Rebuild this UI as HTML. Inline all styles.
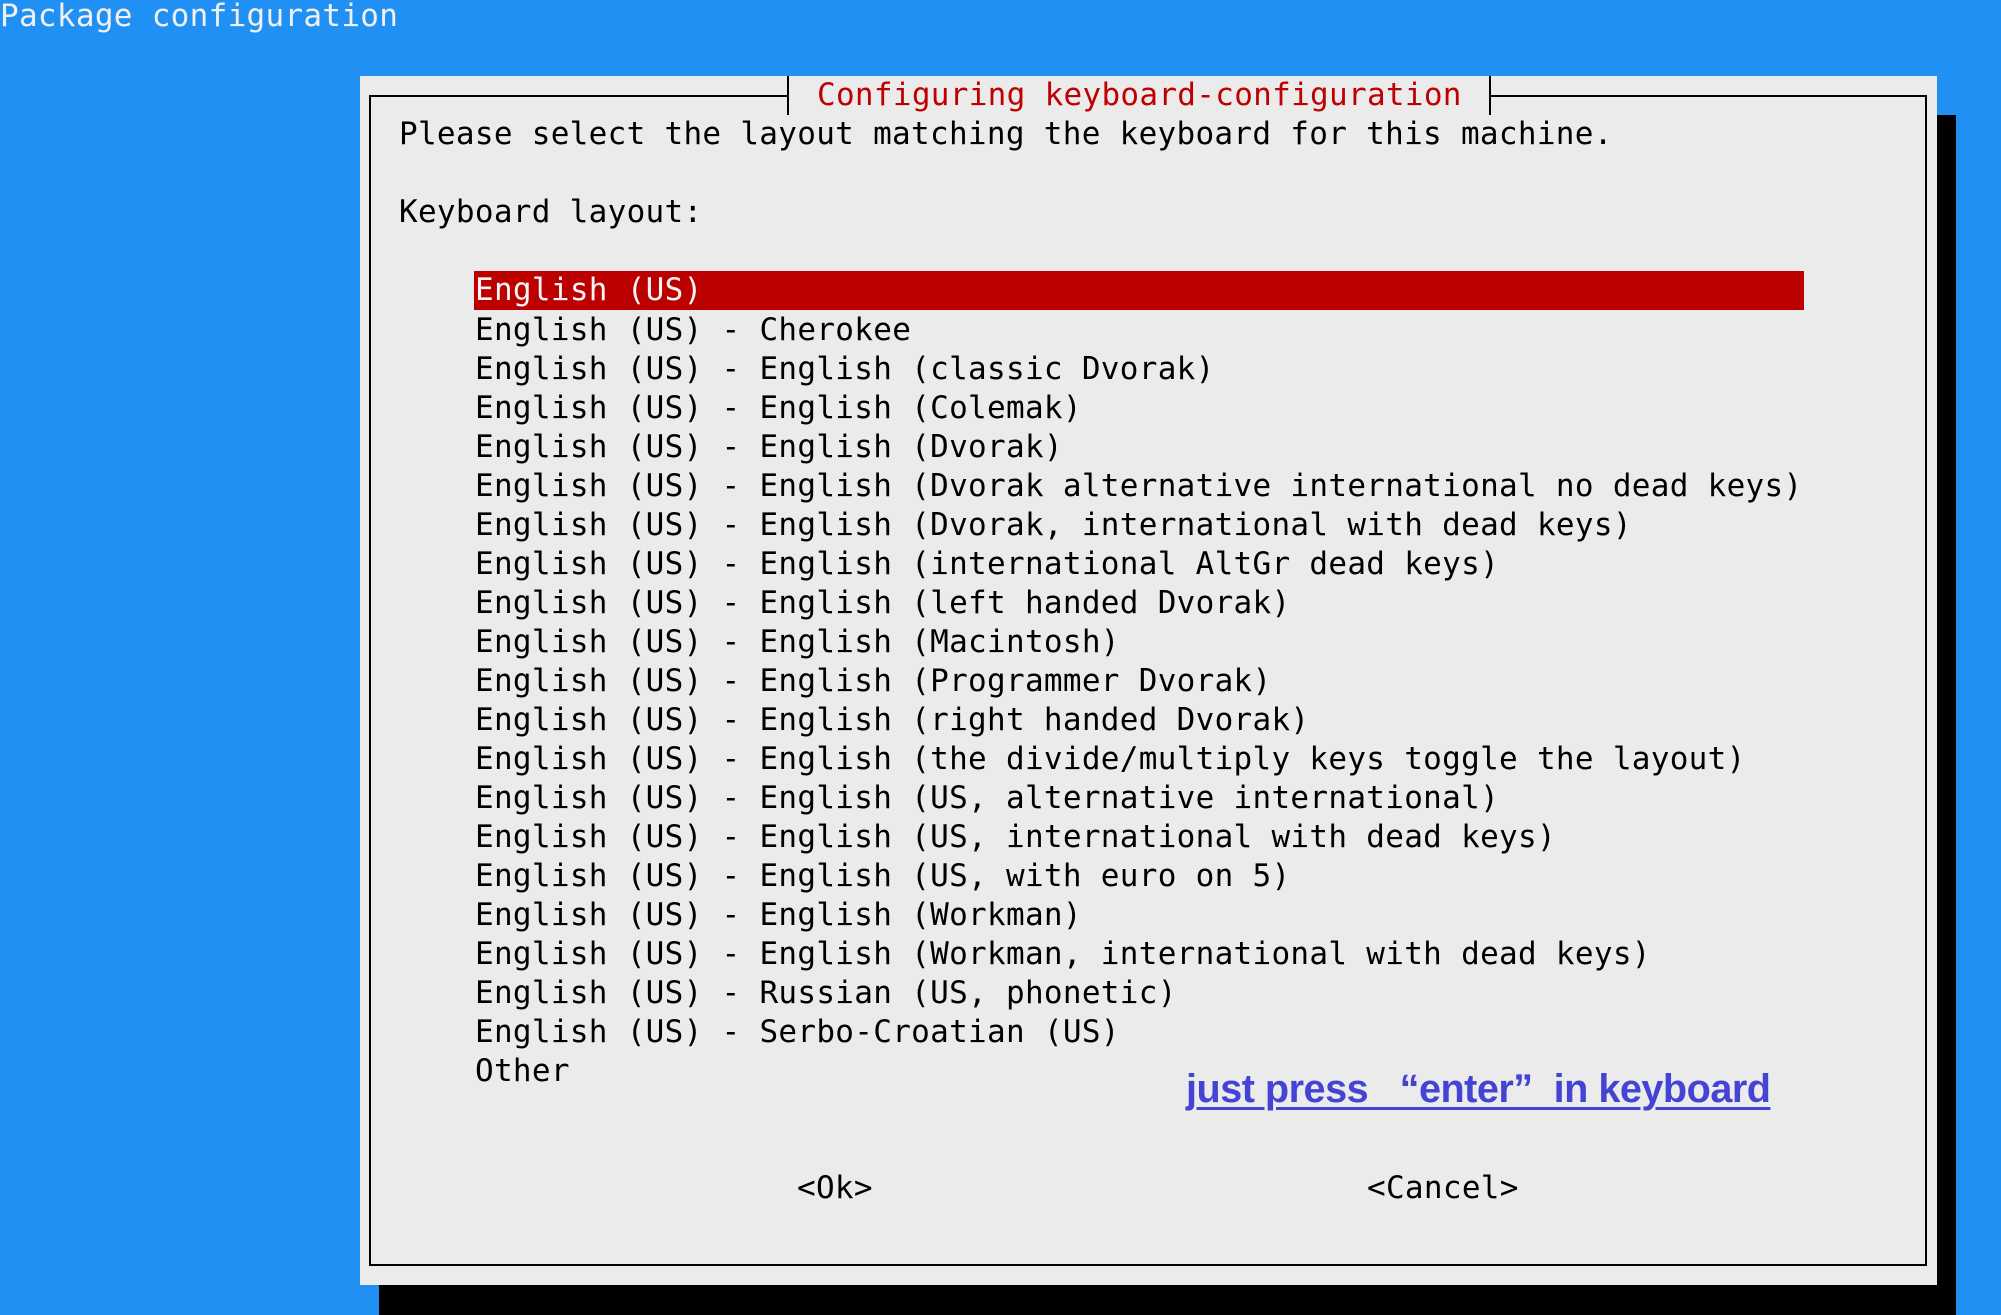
<!DOCTYPE html>
<html><head><meta charset="utf-8"><style>
html,body{margin:0;padding:0}
body{width:2001px;height:1300px;background:#2190f4;position:relative;overflow:hidden;font-family:"DejaVu Sans Mono","Liberation Mono",monospace;font-size:31px;}
.t{position:absolute;white-space:pre;line-height:39px;height:39px;color:#000;letter-spacing:0.3px}
#shadow{position:absolute;left:379px;top:115px;width:1577px;height:1200px;background:#000}
#panel{position:absolute;left:360px;top:76px;width:1577px;height:1209px;background:#ebebeb}
#inner{position:absolute;left:369px;top:95px;width:1558px;height:1171px;border:2px solid #000;box-sizing:border-box}
#gap{position:absolute;left:789px;top:90px;width:700px;height:12px;background:#ebebeb}
.tick{position:absolute;top:76px;width:2px;height:39px;background:#000}
#hl{position:absolute;left:474px;top:271px;width:1330px;height:39px;background:#bc0000}
#link{position:absolute;left:1186px;top:1067px;font-family:"Liberation Sans","DejaVu Sans",sans-serif;font-weight:bold;font-size:40px;color:#4444d4;text-decoration:underline;text-decoration-thickness:3px;text-underline-offset:5px;white-space:pre;letter-spacing:-0.5px;transform:scaleX(0.99);transform-origin:left}
</style></head><body>
<div class="t" style="left:0;top:-3px;color:#f0f0f0">Package configuration</div>
<div id="shadow"></div>
<div id="panel"></div>
<div id="inner"></div>
<div id="gap"></div>
<div class="tick" style="left:787px"></div>
<div class="tick" style="left:1489px"></div>
<div class="t" style="left:817px;top:76px;color:#c00000">Configuring keyboard-configuration</div>
<div class="t" style="left:399px;top:115px">Please select the layout matching the keyboard for this machine.</div>
<div class="t" style="left:399px;top:193px">Keyboard layout:</div>
<div id="hl"></div>
<div class="t" style="left:475px;top:271px;color:#f4f4f4">English (US)</div>
<div class="t" style="left:475px;top:311px">English (US) - Cherokee
English (US) - English (classic Dvorak)
English (US) - English (Colemak)
English (US) - English (Dvorak)
English (US) - English (Dvorak alternative international no dead keys)
English (US) - English (Dvorak, international with dead keys)
English (US) - English (international AltGr dead keys)
English (US) - English (left handed Dvorak)
English (US) - English (Macintosh)
English (US) - English (Programmer Dvorak)
English (US) - English (right handed Dvorak)
English (US) - English (the divide/multiply keys toggle the layout)
English (US) - English (US, alternative international)
English (US) - English (US, international with dead keys)
English (US) - English (US, with euro on 5)
English (US) - English (Workman)
English (US) - English (Workman, international with dead keys)
English (US) - Russian (US, phonetic)
English (US) - Serbo-Croatian (US)
Other</div>
<div id="link">just press   “enter”  in keyboard</div>
<div class="t" style="left:797px;top:1169px">&lt;Ok&gt;</div>
<div class="t" style="left:1367px;top:1169px">&lt;Cancel&gt;</div>
</body></html>
